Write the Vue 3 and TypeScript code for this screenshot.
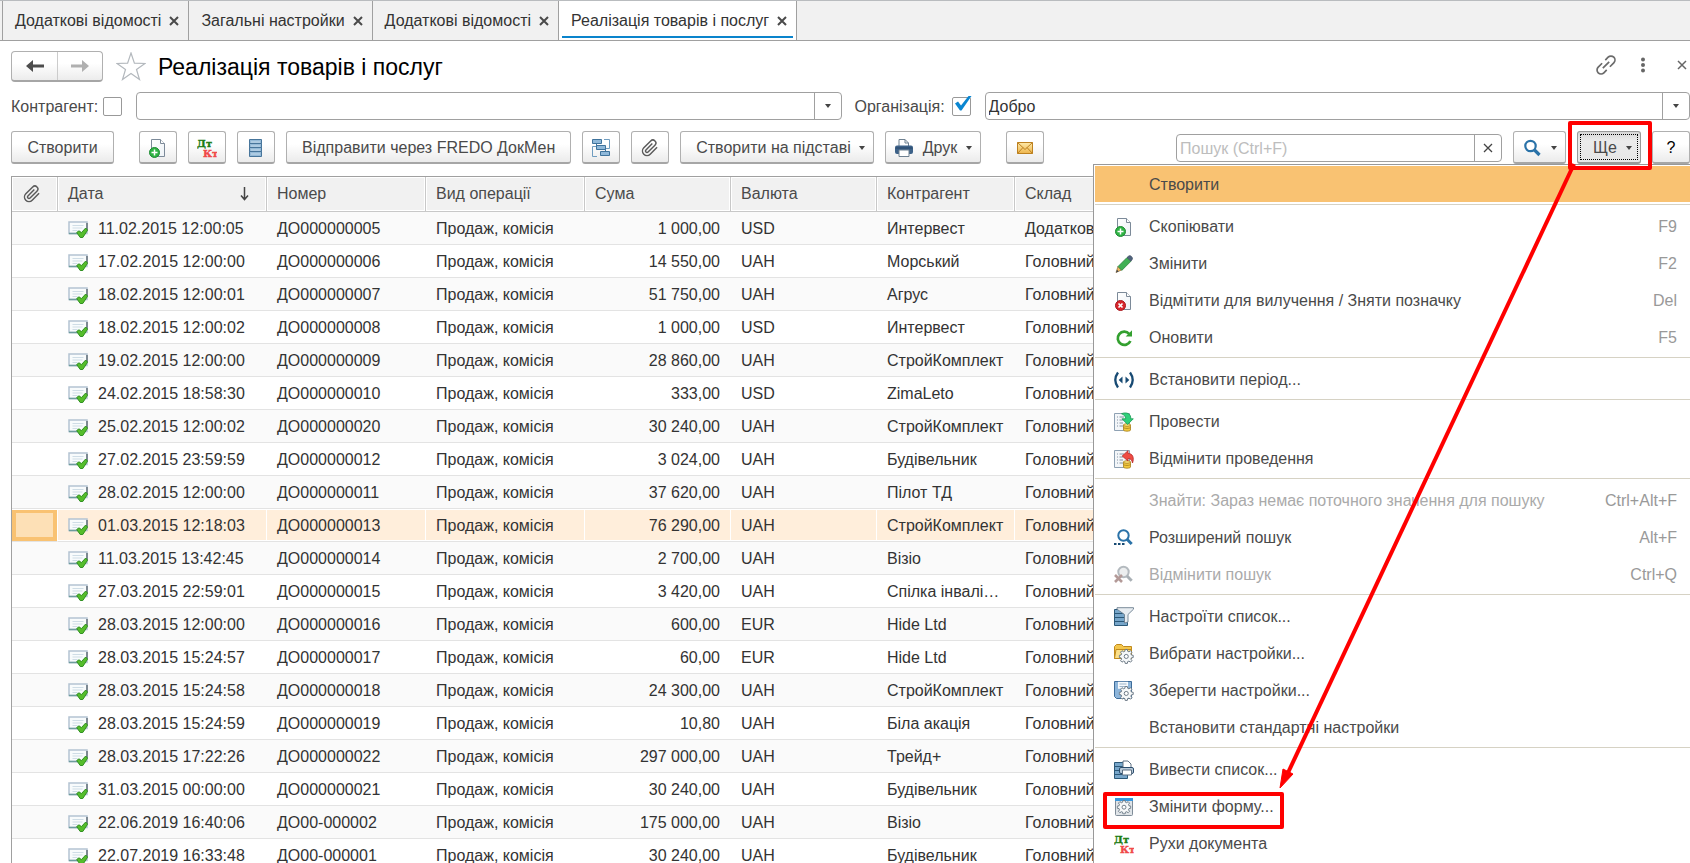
<script setup lang="ts">
import { ref } from 'vue'

interface Tab { title: string; active?: boolean }
interface Row { date: string; num: string; sum: string; cur: string; partner: string; store: string; selected?: boolean }
interface Item { label: string; icon?: string; key?: string; hot?: boolean; disabled?: boolean }

const tabs: Tab[] = [
  { title: 'Додаткові відомості' },
  { title: 'Загальні настройки' },
  { title: 'Додаткові відомості' },
  { title: 'Реалізація товарів і послуг', active: true },
]

const partner = ref('')
const organization = ref('Добро')
const search = ref('')
const byPartner = ref(false)
const byOrganization = ref(true)

const source: string[][] = [
  ['11.02.2015 12:00:05', 'ДО000000005', '1 000,00', 'USD', 'Интервест', 'Додатковий'],
  ['17.02.2015 12:00:00', 'ДО000000006', '14 550,00', 'UAH', 'Морський'],
  ['18.02.2015 12:00:01', 'ДО000000007', '51 750,00', 'UAH', 'Агрус'],
  ['18.02.2015 12:00:02', 'ДО000000008', '1 000,00', 'USD', 'Интервест'],
  ['19.02.2015 12:00:00', 'ДО000000009', '28 860,00', 'UAH', 'СтройКомплект'],
  ['24.02.2015 18:58:30', 'ДО000000010', '333,00', 'USD', 'ZimaLeto'],
  ['25.02.2015 12:00:02', 'ДО000000020', '30 240,00', 'UAH', 'СтройКомплект'],
  ['27.02.2015 23:59:59', 'ДО000000012', '3 024,00', 'UAH', 'Будівельник'],
  ['28.02.2015 12:00:00', 'ДО000000011', '37 620,00', 'UAH', 'Пілот ТД'],
  ['01.03.2015 12:18:03', 'ДО000000013', '76 290,00', 'UAH', 'СтройКомплект'],
  ['11.03.2015 13:42:45', 'ДО000000014', '2 700,00', 'UAH', 'Візіо'],
  ['27.03.2015 22:59:01', 'ДО000000015', '3 420,00', 'UAH', 'Спілка інвалі…'],
  ['28.03.2015 12:00:00', 'ДО000000016', '600,00', 'EUR', 'Hide Ltd'],
  ['28.03.2015 15:24:57', 'ДО000000017', '60,00', 'EUR', 'Hide Ltd'],
  ['28.03.2015 15:24:58', 'ДО000000018', '24 300,00', 'UAH', 'СтройКомплект'],
  ['28.03.2015 15:24:59', 'ДО000000019', '10,80', 'UAH', 'Біла акація'],
  ['28.03.2015 17:22:26', 'ДО000000022', '297 000,00', 'UAH', 'Трейд+'],
  ['31.03.2015 00:00:00', 'ДО000000021', '30 240,00', 'UAH', 'Будівельник'],
  ['22.06.2019 16:40:06', 'ДО00-000002', '175 000,00', 'UAH', 'Візіо'],
  ['22.07.2019 16:33:48', 'ДО00-000001', '30 240,00', 'UAH', 'Будівельник'],
]
const rows: Row[] = source.map((r, i) => ({
  date: r[0], num: r[1], sum: r[2], cur: r[3], partner: r[4], store: r[5] ?? 'Головний', selected: i === 9,
}))

const groups: Item[][] = [
  [{ label: 'Створити', hot: true }],
  [
    { label: 'Скопіювати', icon: 'copy', key: 'F9' },
    { label: 'Змінити', icon: 'pencil', key: 'F2' },
    { label: 'Відмітити для вилучення / Зняти позначку', icon: 'remove', key: 'Del' },
    { label: 'Оновити', icon: 'refresh', key: 'F5' },
  ],
  [{ label: 'Встановити період...', icon: 'period' }],
  [
    { label: 'Провести', icon: 'post' },
    { label: 'Відмінити проведення', icon: 'unpost' },
  ],
  [
    { label: 'Знайти: Зараз немає поточного значення для пошуку', key: 'Ctrl+Alt+F', disabled: true },
    { label: 'Розширений пошук', icon: 'find', key: 'Alt+F' },
    { label: 'Відмінити пошук', icon: 'unfind', key: 'Ctrl+Q', disabled: true },
  ],
  [
    { label: 'Настроїти список...', icon: 'filter' },
    { label: 'Вибрати настройки...', icon: 'folder' },
    { label: 'Зберегти настройки...', icon: 'save' },
    { label: 'Встановити стандартні настройки' },
  ],
  [
    { label: 'Вивести список...', icon: 'output' },
    { label: 'Змінити форму...', icon: 'form' },
    { label: 'Рухи документа', icon: 'dtkt' },
  ],
]
</script>

<template>
  <div class="page">
    <svg class="defs" aria-hidden="true">
      <defs>
        <linearGradient id="g-env" x1="0" y1="0" x2="0" y2="1"><stop offset="0" stop-color="#fde9a8" /><stop offset="1" stop-color="#eeb54c" /></linearGradient>
        <linearGradient id="g-doc" x1="0" y1="0" x2="1" y2="1"><stop offset="0" stop-color="#fff" /><stop offset="1" stop-color="#eef3f7" /></linearGradient>
        <symbol id="page-shape" viewBox="0 0 20 20">
          <path d="M3.500 1.500h9l4 4v13h-13z" fill="url(#g-doc)" stroke="#7c8a99" />
          <path d="M12.500 1.500v4h4" fill="#fff" stroke="#7c8a99" />
        </symbol>
        <symbol id="i-copy" viewBox="0 0 20 20">
          <use href="#page-shape" width="20" height="20" />
          <circle cx="6.500" cy="14.500" r="5" fill="#2fb344" stroke="#1e8a32" />
          <path d="M6.500 11.500v6M3.500 14.500h6" stroke="#fff" stroke-width="1.500" />
        </symbol>
        <symbol id="i-remove" viewBox="0 0 20 20">
          <use href="#page-shape" width="20" height="20" />
          <circle cx="6.500" cy="14.500" r="5" fill="#d8262c" stroke="#a8171c" />
          <path d="M4.500 12.500l4 4M8.500 12.500l-4 4" stroke="#fff" stroke-width="1.700" />
        </symbol>
        <symbol id="i-pencil" viewBox="0 0 20 20">
          <path d="M2 18.500l2-6 3.500 3.500z" fill="#f0b860" stroke="#8a6a3a" stroke-width=".7" />
          <path d="M2 18.500l1-2.700 1.600 1.600z" fill="#39424d" />
          <path d="M4 12.500L13 3.500l4 3.700-9.200 9.200z" fill="#3fb054" stroke="#2b7d3c" stroke-width=".7" />
          <path d="M13 3.500l2-1.700c1.500-.8 4 1.500 3.400 3.300L17 7.200z" fill="#50627c" stroke="#3c4c63" stroke-width=".7" />
        </symbol>
        <symbol id="i-refresh" viewBox="0 0 20 20">
          <path d="M16.400 13a6.600 6.600 0 1 1-1.200-7.200" fill="none" stroke="#33a02f" stroke-width="2.700" />
          <path d="M18 2.200v6.300h-6.300z" fill="#33a02f" />
        </symbol>
        <symbol id="i-period" viewBox="0 0 20 20">
          <path d="M4 2.500q-5.400 7.500 0 15M16 2.500q5.400 7.500 0 15" fill="none" stroke="#174a73" stroke-width="2.300" />
          <path d="M8.500 6.500v7L4.700 10zM11.500 6.500v7l3.800-3.500z" fill="#174a73" />
        </symbol>
        <symbol id="sheet" viewBox="0 0 20 20">
          <path d="M.5 1.500h15v17H.5z" fill="#f3f6f9" stroke="#8ea1b3" />
          <path d="M3 5h1M5.500 5H10M3 8h1M5.500 8H9M3 11h1M5.500 11H9M3 14h1M5.500 14H9" stroke="#8292a2" />
          <path d="M9.500 13v5c0 1.600 7 1.600 7 0v-5z" fill="#f2c93e" stroke="#a87f1c" stroke-width=".8" />
          <path d="M9.500 15.300c0 1.500 7 1.500 7 0" fill="none" stroke="#a87f1c" stroke-width=".8" />
          <ellipse cx="13" cy="13" rx="3.500" ry="1.300" fill="#ffe680" stroke="#a87f1c" stroke-width=".8" />
        </symbol>
        <symbol id="i-post" viewBox="0 0 20 20">
          <use href="#sheet" width="20" height="20" />
          <path d="M7.500 1.700c5-2 9.800 0 9.200 5.100h2.600L13.600 12.500 8 6.800h3.700c.2-2.500-1.700-4-4.200-5.100z" fill="#2fd07a" stroke="#169a52" stroke-width=".8" />
        </symbol>
        <symbol id="i-unpost" viewBox="0 0 20 20">
          <use href="#sheet" width="20" height="20" />
          <path d="M18.500 14c2-5.500 0-9.700-4.500-9.500V1.700L8.200 7l5.800 5V9.500c2.500-.2 4 1.500 4.500 4.500z" fill="#ee4b43" stroke="#b9282a" stroke-width=".8" />
        </symbol>
        <symbol id="i-mag" viewBox="0 0 20 20">
          <circle cx="8.500" cy="8" r="5.200" fill="#fff" stroke="#2a72a8" stroke-width="2.200" />
          <path d="M12.500 12l5 5" stroke="#2a72a8" stroke-width="3.200" />
        </symbol>
        <symbol id="i-find" viewBox="0 0 20 20">
          <circle cx="9.500" cy="7.500" r="5.200" fill="#fff" stroke="#2a72a8" stroke-width="2" />
          <path d="M13 11.300l4.700 4.700" stroke="#2a72a8" stroke-width="3" />
          <path d="M0 16h2.500M4 16h2.500M8 16h2.500" stroke="#174a73" stroke-width="2" />
        </symbol>
        <symbol id="i-unfind" viewBox="0 0 20 20">
          <circle cx="9.500" cy="7" r="5.200" fill="#eceeef" stroke="#b4babf" stroke-width="2" />
          <path d="M13 11l4.700 4.700" stroke="#a9b0b5" stroke-width="3" />
          <path d="M1 10l7 7M8 10l-7 7" stroke="#b39a98" stroke-width="2.600" />
        </symbol>
        <symbol id="bars" viewBox="0 0 20 20">
          <path d="M.5 2.500h13v16H.5z" fill="#77a6ca" stroke="#2b5878" />
          <path d="M1 6.500h12M1 10.500h12M1 14.500h12" stroke="#2b5878" />
        </symbol>
        <symbol id="i-filter" viewBox="0 0 20 20">
          <use href="#bars" width="20" height="20" />
          <path d="M3 .7h16.500v1.500L14 7.500V15l-3.500 1V7.500L3 2.200z" fill="#e8edf1" stroke="#6c7f90" stroke-width=".9" />
        </symbol>
        <symbol id="gear" viewBox="0 0 16 16">
          <path d="M6.900 1h2.200l.4 1.900 1.300.5 1.600-1.100 1.500 1.500-1.100 1.600.5 1.300 1.900.4v2.200l-1.900.4-.5 1.300 1.100 1.600-1.500 1.500-1.600-1.100-1.300.5-.4 1.900H6.900l-.4-1.900-1.300-.5-1.600 1.100-1.500-1.500 1.100-1.600-.5-1.300L.8 9.300V7.100l1.900-.4.5-1.300-1.100-1.600 1.500-1.500 1.600 1.100 1.300-.5z" fill="#f6f8f9" stroke="#697783" stroke-width="1" />
          <circle cx="8" cy="8.200" r="2.100" fill="#fff" stroke="#697783" />
        </symbol>
        <symbol id="i-folder" viewBox="0 0 20 20">
          <path d="M.5 14.500v-12l2-2h5l2 2h8v12z" fill="#f3c64c" stroke="#c08a1d" />
          <path d="M.5 14.500l1.500-9h15.500v9z" fill="#fbe08a" stroke="#c08a1d" />
          <use href="#gear" x="4.500" y="4.500" width="15.500" height="15.500" />
        </symbol>
        <symbol id="i-save" viewBox="0 0 20 20">
          <path d="M.5 .5h17v17h-15l-2-2z" fill="#8db5da" stroke="#3d6c9a" />
          <path d="M4 .8h10v7H4z" fill="#f6f9fc" />
          <path d="M5.500 3h7M5.500 5.500h7" stroke="#9db4c9" />
          <use href="#gear" x="4.500" y="4.500" width="15.500" height="15.500" />
        </symbol>
        <symbol id="i-output" viewBox="0 0 20 20">
          <use href="#bars" width="20" height="20" />
          <path d="M9 8V1h5l3 3v4" fill="#fff" stroke="#5e7183" />
          <rect x="5.500" y="7.500" width="14" height="6" rx="1.500" fill="#b9cad9" stroke="#2b4d6d" />
          <path d="M8.500 10h9v5h-9z" fill="#fff" stroke="#5e7183" />
        </symbol>
        <symbol id="i-form" viewBox="0 0 20 20">
          <rect x="1.500" y="1.500" width="17" height="17" rx="1" fill="#dfe4e8" stroke="#7f8c98" />
          <path d="M1 1h18v3H1z" fill="#3a97dc" />
          <use href="#gear" x="2.500" y="2.500" width="15" height="15" />
        </symbol>
        <symbol id="i-dtkt" viewBox="0 0 20 20">
          <text x="0" y="9" class="ledger" fill="#1c7c12" stroke="#1c7c12">Дт</text>
          <text x="6" y="19" class="ledger" fill="#f04848" stroke="#f04848">Кт</text>
        </symbol>
        <symbol id="i-list" viewBox="0 0 20 20">
          <path d="M3.500 1.500h12v4h-12zM3.500 5.500h12v4h-12zM3.500 9.500h12v4h-12zM3.500 13.500h12v5h-12z" fill="#94b9d7" stroke="#47759b" />
          <path d="M5 4h9M5 8h9M5 12h9M5 16h9" stroke="#c7dcec" />
        </symbol>
        <symbol id="i-tree" viewBox="0 0 20 20">
          <path d="M6 8.500H1.500v10H6M13 1.500h5.500v9H14" fill="none" stroke="#6f9cbf" />
          <path d="M5.500 5v5M14.500 10v5" stroke="#3f739c" />
          <path d="M1.500 1.500h9v4h-9zM5.500 7.500h9v4h-9zM9.500 13.500h9v4h-9z" fill="#8fb8d9" stroke="#3f739c" />
        </symbol>
        <symbol id="i-clip" viewBox="0 0 24 24">
          <path d="M21.440 11.050l-9.190 9.190a6 6 0 0 1-8.490-8.490l9.190-9.190a4 4 0 0 1 5.660 5.660l-9.200 9.190a2 2 0 0 1-2.830-2.830l8.490-8.480" fill="none" stroke="#5b5b5b" stroke-width="2" />
        </symbol>
        <symbol id="i-print" viewBox="0 0 20 20">
          <path d="M5 8V1.500h6l3.500 3.500v3" fill="#fff" stroke="#6f8191" />
          <path d="M11 1.500V5h3.500" fill="none" stroke="#6f8191" />
          <rect x="1" y="7.500" width="18" height="8.500" rx="2" fill="#3c6188" />
          <path d="M1.500 10h17" stroke="#274768" />
          <path d="M5 12h10v6.500H5z" fill="#fff" stroke="#6f8191" />
        </symbol>
        <symbol id="i-mail" viewBox="0 0 20 20">
          <path d="M2.500 4.500h15v11h-15z" fill="url(#g-env)" stroke="#bd8120" />
          <path d="M2.500 4.500l7.500 7 7.500-7M2.500 15.500l5.500-6M17.500 15.500l-5.500-6" fill="none" stroke="#bd8120" />
        </symbol>
        <symbol id="i-link" viewBox="0 0 20 20">
          <g transform="rotate(-45 10 10)" fill="none" stroke="#6a6a6a" stroke-width="1.700">
            <path d="M8.500 6H3a4 4 0 0 0 0 8h4M11.500 14H17a4 4 0 0 0 0-8h-4M5.500 10h9" />
          </g>
        </symbol>
        <symbol id="i-doc" viewBox="0 0 20 17">
          <path d="M1 1h18v11.500H1z" fill="#f8fbfc" stroke="#b4c3d2" stroke-width="1.500" />
          <path d="M1 12.500h9" stroke="#6d9c9c" stroke-width="1.500" />
          <path d="M19 2v7" stroke="#64707a" stroke-width="1.500" />
          <path d="M4.500 4.500h11M4.500 7h10M4.500 9.500h5" stroke="#cfdde6" />
          <path d="M8.700 11.500l2.300-1.700 2.400 1.800 4.300-4.600 1.900 2.200-4.800 7.300h-2.600z" fill="#55bd2b" stroke="#2f8f22" />
        </symbol>
      </defs>
    </svg>

    <nav class="tabs" aria-label="Вікна">
      <div v-for="(t, i) in tabs" :key="i" class="tab" :class="{ active: t.active }">
        <a href="#" class="tab-link">{{ t.title }}</a>
        <button class="bare" aria-label="Закрити вкладку">
          <svg width="10" height="10" viewBox="0 0 10 10"><path d="M1 1l8 8M9 1l-8 8" stroke="#4a4a4a" stroke-width="2" /></svg>
        </button>
      </div>
    </nav>

    <header class="head">
      <div class="history">
        <button class="hist" aria-label="Назад">
          <svg width="18" height="14" viewBox="0 0 18 14"><path d="M0 7l7-6v4.500h11v3H7V13z" fill="#4d4d4d" /></svg>
        </button>
        <button class="hist" aria-label="Вперед">
          <svg width="18" height="14" viewBox="0 0 18 14"><path d="M18 7l-7-6v4.500H0v3h11V13z" fill="#b0b0b0" /></svg>
        </button>
      </div>
      <button class="bare star" aria-label="Вибране">
        <svg width="30" height="29" viewBox="0 0 30 29"><path d="M15 1l3.400 10.200 10.600.3-8.500 6 3 10-8.500-6-8.500 6 3-10-8.500-6 10.600-.3z" fill="#fff" stroke="#b3b8bd" stroke-width="1.200" /></svg>
      </button>
      <h1>Реалізація товарів і послуг</h1>
      <div class="window-tools">
        <button class="bare" aria-label="Посилання"><svg width="20" height="20"><use href="#i-link" /></svg></button>
        <button class="bare" aria-label="Меню вікна">
          <svg width="6" height="16" viewBox="0 0 6 16"><circle cx="3" cy="2.500" r="2" fill="#666" /><circle cx="3" cy="8" r="2" fill="#666" /><circle cx="3" cy="13.500" r="2" fill="#666" /></svg>
        </button>
        <button class="bare" aria-label="Закрити">
          <svg width="10" height="10" viewBox="0 0 10 10"><path d="M1 1l8 8M9 1l-8 8" stroke="#666" stroke-width="1.500" /></svg>
        </button>
      </div>
    </header>

    <div class="filters">
      <label for="by-partner">Контрагент:</label>
      <span class="check"><input id="by-partner" v-model="byPartner" type="checkbox"></span>
      <div class="combo">
        <input v-model="partner" type="text" aria-label="Контрагент">
        <button aria-label="Вибрати контрагента"><i class="caret"></i></button>
      </div>
      <label for="by-org" class="org">Організація:</label>
      <span class="check">
        <input id="by-org" v-model="byOrganization" type="checkbox">
        <svg v-if="byOrganization" class="tick" width="18" height="17" viewBox="0 0 18 17"><path d="M1 8.500l3-2 3 4L14.500 1h3L7.500 15.500H6z" fill="#0a86d1" /></svg>
      </span>
      <div class="combo">
        <input v-model="organization" type="text" aria-label="Організація">
        <button aria-label="Вибрати організацію"><i class="caret"></i></button>
      </div>
    </div>

    <div class="toolbar">
      <button class="btn create">Створити</button>
      <button class="btn icon" aria-label="Скопіювати"><svg width="20" height="20"><use href="#i-copy" /></svg></button>
      <button class="btn icon" aria-label="Рухи документа"><svg width="20" height="20"><use href="#i-dtkt" /></svg></button>
      <button class="btn icon" aria-label="Реєстр"><svg width="20" height="20"><use href="#i-list" /></svg></button>
      <button class="btn">Відправити через FREDO ДокМен</button>
      <button class="btn icon" aria-label="Структура"><svg width="20" height="20"><use href="#i-tree" /></svg></button>
      <button class="btn icon" aria-label="Файли"><svg width="18" height="18"><use href="#i-clip" /></svg></button>
      <button class="btn drop">Створити на підставі<i class="caret"></i></button>
      <button class="btn print"><svg width="20" height="20"><use href="#i-print" /></svg>Друк<i class="caret"></i></button>
      <button class="btn icon mail" aria-label="Надіслати"><svg width="20" height="20"><use href="#i-mail" /></svg></button>
      <div class="combo search">
        <input v-model="search" type="text" placeholder="Пошук (Ctrl+F)" aria-label="Пошук">
        <button aria-label="Очистити">
          <svg width="10" height="10" viewBox="0 0 10 10"><path d="M1 1l8 8M9 1l-8 8" stroke="#444" stroke-width="1.300" /></svg>
        </button>
      </div>
      <button class="btn find" aria-label="Знайти"><svg width="20" height="20"><use href="#i-mag" /></svg><i class="caret"></i></button>
      <button class="btn more" aria-expanded="true"><span class="focus">Ще<i class="caret"></i></span></button>
      <button class="btn help">?</button>

      <div class="menu" role="menu">
        <div v-for="(g, gi) in groups" :key="gi" class="group">
          <button v-for="it in g" :key="it.label" class="item" :class="{ hot: it.hot }" role="menuitem" :disabled="it.disabled">
            <span class="pic"><svg v-if="it.icon" width="20" height="20"><use :href="'#i-' + it.icon" /></svg></span>
            <span class="name">{{ it.label }}</span>
            <span class="key">{{ it.key }}</span>
          </button>
        </div>
      </div>

      <svg class="marks" width="600" height="720" viewBox="0 0 600 720" aria-hidden="true">
        <g fill="none" stroke="#f00" stroke-width="4">
          <rect x="480" y="2" width="80" height="45" stroke-linejoin="round" />
          <rect x="15" y="673" width="177" height="33" stroke-linejoin="round" />
          <path d="M484 43L196 656" />
        </g>
        <path d="M190 667l3-19 10 5z" fill="#f00" stroke="#f00" />
      </svg>
    </div>

    <div class="list">
      <table>
        <colgroup>
          <col class="c-clip"><col class="c-date"><col class="c-num"><col class="c-op"><col class="c-sum"><col class="c-cur"><col class="c-partner"><col>
        </colgroup>
        <thead>
          <tr>
            <th class="clip" aria-label="Файли"><svg width="18" height="18"><use href="#i-clip" /></svg></th>
            <th>
              <span class="sort">Дата
                <svg width="9" height="14" viewBox="0 0 9 14"><path d="M4.500 0v12M1 8.500l3.500 4 3.500-4" fill="none" stroke="#444" stroke-width="1.500" /></svg>
              </span>
            </th>
            <th>Номер</th><th>Вид операції</th><th>Сума</th><th>Валюта</th><th>Контрагент</th><th>Склад</th>
          </tr>
        </thead>
        <tbody>
          <tr v-for="r in rows" :key="r.num" :class="{ selected: r.selected }">
            <td></td>
            <td><span class="when"><svg width="20" height="17"><use href="#i-doc" /></svg>{{ r.date }}</span></td>
            <td>{{ r.num }}</td>
            <td>Продаж, комісія</td>
            <td class="num">{{ r.sum }}</td>
            <td>{{ r.cur }}</td>
            <td>{{ r.partner }}</td>
            <td>{{ r.store }}</td>
          </tr>
        </tbody>
      </table>
    </div>
  </div>
</template>

<style>
body { margin: 0; }
</style>

<style scoped>
.page {
  display: flex;
  flex-direction: column;
  height: 100vh;
  overflow: hidden;
  background: #fff;
  color: #4a4a4a;
  font: 16px/20px "Liberation Sans", Arial, sans-serif;
}
.page * { box-sizing: border-box; }
.defs { position: absolute; width: 0; height: 0; }
.ledger { font: bold 10px "DejaVu Serif", "Liberation Serif", serif; stroke-width: .4px; }
button, input { font: inherit; color: inherit; margin: 0; }
button { white-space: nowrap; }
svg { display: block; flex: none; }
.bare { display: flex; padding: 0; border: 0; background: none; }

.tabs {
  display: flex;
  flex: none;
  height: 41px;
  padding-left: 2px;
  border-top: 1px solid #b9bcbf;
  border-bottom: 1px solid #a0a0a0;
  background: #f1f1f1;
}
.tab {
  position: relative;
  display: flex;
  align-items: center;
  gap: 8px;
  padding: 0 9px 0 12px;
  border-left: 1px solid #a0a0a0;
}
.tab-link { color: #333; text-decoration: none; white-space: nowrap; }
.tab.active { background: #fff; border-right: 1px solid #a0a0a0; }
.tab.active::after {
  content: "";
  position: absolute;
  right: 3px;
  bottom: 2px;
  left: 3px;
  height: 2px;
  background: #0a84cc;
}

.head { display: flex; align-items: center; flex: none; height: 51px; padding: 0 3px 0 11px; }
.history {
  display: flex;
  height: 31px;
  border: 1px solid #b0b0b0;
  border-bottom: 2px solid #a6a6a6;
  border-radius: 4px;
  background: linear-gradient(#fff 40%, #ececec);
}
.hist { display: flex; align-items: center; justify-content: center; width: 45px; padding: 0; border: 0; background: none; }
.hist + .hist { border-left: 1px solid #ccc; }
.star { margin: 0 12px 0 13px; }
h1 { margin: 0; color: #000; font-size: 23px; font-weight: 400; line-height: 28px; white-space: nowrap; }
.window-tools { display: flex; align-items: center; margin: 0 0 3px auto; }
.window-tools button + button { margin-left: 24px; }
.window-tools button:last-child { margin-left: 31px; }

.filters { display: flex; align-items: center; flex: none; height: 28px; padding-left: 11px; }
.filters label { width: 92px; padding-top: 2px; white-space: nowrap; }
.filters .org { width: 97px; margin-left: 13px; }
.check { position: relative; flex: none; width: 19px; height: 19px; margin-right: 14px; }
.check input { display: block; width: 19px; height: 19px; border: 1px solid #999; border-radius: 2px; background: #fff; appearance: none; }
.tick { position: absolute; top: -2px; left: 2px; pointer-events: none; }
.combo { display: flex; flex: 1; min-width: 0; height: 28px; border: 1px solid #a0a0a0; border-radius: 4px; background: #fff; }
.combo input { flex: 1; min-width: 0; padding: 2px 3px 0; border: 0; outline: 0; background: none; color: #333; }
.combo input::placeholder { color: #bdbdbd; opacity: 1; }
.combo button { display: flex; align-items: center; justify-content: center; width: 27px; padding: 0; border: 0; border-left: 1px solid #a0a0a0; background: none; }
.caret { display: block; flex: none; width: 0; height: 0; border: 3px solid transparent; border-top: 4px solid #444; border-bottom: 0; }

.toolbar { position: relative; display: flex; align-items: center; flex: none; gap: 11px; height: 33px; margin-top: 11px; padding-left: 11px; }
.btn {
  display: flex;
  align-items: center;
  justify-content: center;
  flex: none;
  height: 33px;
  padding: 2px 15px 0;
  border: 1px solid #b0b0b0;
  border-bottom: 2px solid #a6a6a6;
  border-radius: 3px;
  background: linear-gradient(#fff 40%, #ebebeb);
}
.btn.icon { width: 38px; padding: 2px 0 0; }
.btn.drop { gap: 8px; padding-right: 8px; }
.btn.print { gap: 9px; padding: 2px 8px 0; }
.btn.find { justify-content: space-between; width: 53px; padding: 2px 8px 0; }
.btn.create { width: 103px; margin-right: 14px; }
.btn.mail { margin: 0 auto 0 14px; }
.search { flex: none; width: 326px; }
.btn.more { width: 64px; padding: 0 2px; border-color: #999; background: linear-gradient(#d6d6d6, #ebebeb 30%, #e6e6e6); }
.focus { display: flex; align-items: center; justify-content: flex-end; gap: 9px; width: 100%; height: 26px; padding: 2px 5px 0 0; border: 1px dotted #000; }
.help { width: 38px; color: #000; }

.menu {
  position: absolute;
  z-index: 2;
  top: 100%;
  right: 0;
  width: 597px;
  min-height: 700px;
  padding-left: 1px;
  border-top: 1px solid #999;
  border-left: 1px solid #999;
  background: #fff;
}
.group + .group { margin-top: 2px; padding-top: 2px; border-top: 1px solid #d6d2c4; }
.item { display: flex; align-items: center; width: 100%; height: 37px; padding: 2px 13px 0 19px; border: 0; background: none; text-align: left; }
.item.hot { border-top: 1px solid #fff; background: #f9c272; background-clip: padding-box; }
.pic { width: 35px; }
.name { flex: 1; color: #4a4a4a; }
.key { color: #999; }
.item:disabled .name { color: #aaa; }
.marks { position: absolute; z-index: 3; top: -10px; right: 0; pointer-events: none; }

.list { flex: 1; min-height: 0; margin: 12px 0 0 11px; border-top: 1px solid #a0a0a0; border-left: 1px solid #a0a0a0; overflow: hidden; }
table { width: 100%; border-spacing: 0; table-layout: fixed; }
.c-clip { width: 46px; }
.c-date { width: 209px; }
.c-num, .c-op { width: 159px; }
.c-sum, .c-cur { width: 146px; }
.c-partner { width: 138px; }
th {
  height: 35px;
  padding: 0 10px;
  border-right: 1px solid #c8c8c8;
  border-bottom: 1px solid #c8c8c8;
  background: #f1f1f1;
  box-shadow: inset 0 0 0 1px #fff;
  font-weight: 400;
  text-align: left;
}
th.clip { padding: 0 11px; }
.sort { display: flex; align-items: center; justify-content: space-between; padding-right: 7px; }
td { height: 33px; padding: 2px 10px 0; border-bottom: 1px solid #e3e3e3; color: #333; white-space: nowrap; overflow: hidden; }
tbody tr:nth-child(odd) { background: #fafafa; }
td.num { padding-right: 11px; text-align: right; }
.when { display: flex; align-items: center; gap: 10px; }
tbody .selected td { background: #ffeedb; box-shadow: inset 0 1px #fff, inset -1px -1px #fff; }
tbody .selected td:first-child { border-right: 1px solid #fff; background: #fde0b6; box-shadow: inset 0 1px #fff, inset 0 0 0 4px #f9c272; }
</style>
